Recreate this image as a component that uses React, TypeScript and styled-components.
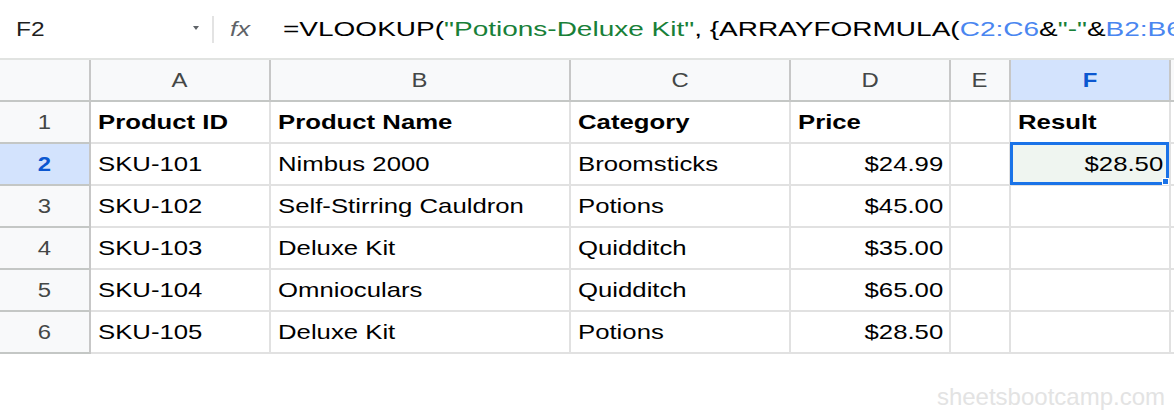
import React from "react";
import styled, { createGlobalStyle } from "styled-components";

const GlobalStyle = createGlobalStyle`
  html, body {
    margin: 0;
    padding: 0;
    background: #fff;
  }
  body {
    font-family: "Liberation Sans", Arial, sans-serif;
    color: #000;
  }
`;

// the reference is stretched sideways, so text is widened to match
const Label = styled.span<{ $origin?: string; $scale?: number }>`
  display: inline-block;
  white-space: nowrap;
  transform: scaleX(${(p) => p.$scale ?? 1.225});
  transform-origin: ${(p) => p.$origin ?? "left"} center;
`;

const Page = styled.div`
  width: 1174px;
  height: 414px;
  overflow: hidden;
  display: flex;
  flex-direction: column;
`;

const FormulaBar = styled.div`
  height: 58px;
  display: flex;
  align-items: center;
  border-bottom: 2px solid #e1e3e1;
  overflow: hidden;
`;

const NameBox = styled.div`
  width: 212px;
  box-sizing: border-box;
  padding: 0 13px 0 16px;
  display: flex;
  align-items: center;
  justify-content: space-between;
  font-size: 20px;
  color: #1f1f1f;
`;

const Caret = styled.span`
  width: 0;
  height: 0;
  border-left: 3px solid transparent;
  border-right: 3px solid transparent;
  border-top: 4px solid #5f6368;
  margin-top: -2px;
`;

const Divider = styled.div`
  width: 2px;
  height: 27px;
  background: #e3e3e3;
`;

const Fx = styled.div`
  width: 69px;
  box-sizing: border-box;
  padding-left: 16px;
  font-size: 21px;
  font-style: italic;
  color: #5f6368;
`;

const Formula = styled.div`
  flex: 1;
  font-size: 21px;
  color: #000;
  white-space: nowrap;
`;

const Tok = styled.span<{ $kind?: "str" | "ref" }>`
  color: ${(p) =>
    p.$kind === "str" ? "#188038" : p.$kind === "ref" ? "#4a86f0" : "#000"};
`;

const Grid = styled.div`
  display: grid;
  grid-template-columns: 91px 180px 300px 220px 160px 60px 160px 1fr;
  grid-auto-rows: 42px;
`;

const HeadCell = styled.div<{ $active?: boolean }>`
  box-sizing: border-box;
  display: flex;
  align-items: center;
  justify-content: center;
  background: ${(p) => (p.$active ? "#d3e3fd" : "#f8f9fa")};
  border-right: 2px solid #c7c7c7;
  border-bottom: 2px solid #c4c7c5;
  font-size: 19.5px;
  color: ${(p) => (p.$active ? "#0b57d0" : "#444746")};
  font-weight: ${(p) => (p.$active ? 700 : 400)};
`;

const Cell = styled.div<{ $right?: boolean; $bold?: boolean; $selected?: boolean }>`
  position: relative;
  box-sizing: border-box;
  display: flex;
  align-items: center;
  justify-content: ${(p) => (p.$right ? "flex-end" : "flex-start")};
  padding: 0 6px 0 7px;
  background: ${(p) => (p.$selected ? "#eff5f0" : "#fff")};
  border-right: 2px solid #e1e1e1;
  border-bottom: 2px solid #e1e1e1;
  font-size: 21px;
  font-weight: ${(p) => (p.$bold ? 700 : 400)};
  color: #000;
`;

const Selection = styled.div`
  position: absolute;
  top: -2px;
  left: -1px;
  right: 0;
  bottom: -1px;
  border: 3px solid #1a73e8;
  pointer-events: none;
`;

const Handle = styled.div`
  position: absolute;
  right: -3px;
  bottom: -3px;
  width: 5px;
  height: 5px;
  background: #1a73e8;
  border: 1px solid #fff;
`;

const Footer = styled.div`
  flex: 1;
  display: flex;
  justify-content: flex-end;
  align-items: flex-end;
  padding: 0 9px 5px 0;
  font-size: 24px;
  line-height: 1;
  color: #e3e3e3;
`;

const columns = ["A", "B", "C", "D", "E", "F", ""];
const activeCol = "F";
const activeRow = 2;

type Row = { cells: string[]; bold?: boolean };

const rows: Row[] = [
  { cells: ["Product ID", "Product Name", "Category", "Price", "", "Result", ""], bold: true },
  { cells: ["SKU-101", "Nimbus 2000", "Broomsticks", "$24.99", "", "$28.50", ""] },
  { cells: ["SKU-102", "Self-Stirring Cauldron", "Potions", "$45.00", "", "", ""] },
  { cells: ["SKU-103", "Deluxe Kit", "Quidditch", "$35.00", "", "", ""] },
  { cells: ["SKU-104", "Omnioculars", "Quidditch", "$65.00", "", "", ""] },
  { cells: ["SKU-105", "Deluxe Kit", "Potions", "$28.50", "", "", ""] },
];

const isNumber = (v: string) => v.startsWith("$");

function App() {
  return (
    <Page>
      <GlobalStyle />
      <FormulaBar>
        <NameBox>
          <Label>F2</Label>
          <Caret />
        </NameBox>
        <Divider />
        <Fx>
          <Label>fx</Label>
        </Fx>
        <Formula>
          <Label $scale={1.333}>
            <Tok>=VLOOKUP(</Tok>
            <Tok $kind="str">"Potions-Deluxe Kit"</Tok>
            <Tok>, {"{"}ARRAYFORMULA(</Tok>
            <Tok $kind="ref">C2:C6</Tok>
            <Tok>&amp;</Tok>
            <Tok $kind="str">"-"</Tok>
            <Tok>&amp;</Tok>
            <Tok $kind="ref">B2:B6</Tok>
          </Label>
        </Formula>
      </FormulaBar>

      <Grid>
        <HeadCell />
        {columns.map((c, i) => (
          <HeadCell key={i} $active={c === activeCol}>
            <Label $origin="center">{c}</Label>
          </HeadCell>
        ))}

        {rows.map((row, r) => (
          <React.Fragment key={r}>
            <HeadCell $active={r + 1 === activeRow}>
              <Label $origin="center">{r + 1}</Label>
            </HeadCell>
            {row.cells.map((v, c) => {
              const selected = r + 1 === activeRow && columns[c] === activeCol;
              const right = isNumber(v);
              return (
                <Cell key={c} $right={right} $bold={row.bold} $selected={selected}>
                  {v && <Label $origin={right ? "right" : "left"}>{v}</Label>}
                  {selected && (
                    <Selection>
                      <Handle />
                    </Selection>
                  )}
                </Cell>
              );
            })}
          </React.Fragment>
        ))}
      </Grid>

      <Footer>sheetsbootcamp.com</Footer>
    </Page>
  );
}

export default App;
